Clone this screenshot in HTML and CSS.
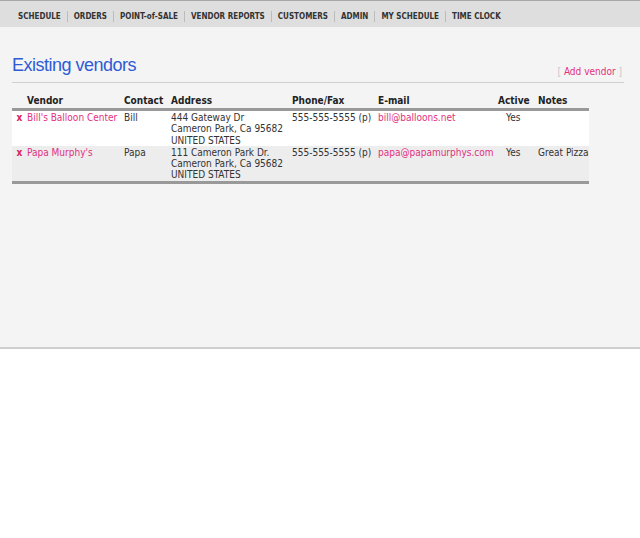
FILE: index.html
```html
<!DOCTYPE html>
<html lang="en">
<head>
  <meta charset="UTF-8">
  <title>Existing vendors</title>
  <link rel="stylesheet" href="styles.css">
</head>
<body>
  <div class="nav">
    <a href="#">SCHEDULE</a>
    <a href="#">ORDERS</a>
    <a href="#">POINT-of-SALE</a>
    <a href="#">VENDOR REPORTS</a>
    <a href="#">CUSTOMERS</a>
    <a href="#">ADMIN</a>
    <a href="#">MY SCHEDULE</a>
    <a href="#">TIME CLOCK</a>
  </div>

  <div class="content">
    <div class="title-row">
      <h1>Existing vendors</h1>
      <span class="add">[ <a href="#">Add vendor</a> ]</span>
    </div>

    <table class="vendors">
      <colgroup>
        <col class="c-del">
        <col class="c-vendor">
        <col class="c-contact">
        <col class="c-address">
        <col class="c-phone">
        <col class="c-email">
        <col class="c-active">
        <col class="c-notes">
      </colgroup>
      <thead>
        <tr>
          <th></th>
          <th>Vendor</th>
          <th>Contact</th>
          <th>Address</th>
          <th>Phone/Fax</th>
          <th>E-mail</th>
          <th>Active</th>
          <th>Notes</th>
        </tr>
      </thead>
      <tbody>
        <tr>
          <td class="del"><a href="#">x</a></td>
          <td><a href="#">Bill's Balloon Center</a></td>
          <td>Bill</td>
          <td>444 Gateway Dr<br>Cameron Park, Ca 95682<br>UNITED STATES</td>
          <td>555-555-5555 (p)</td>
          <td><a href="#">bill@balloons.net</a></td>
          <td class="active">Yes</td>
          <td></td>
        </tr>
        <tr class="alt">
          <td class="del"><a href="#">x</a></td>
          <td><a href="#">Papa Murphy's</a></td>
          <td>Papa</td>
          <td>111 Cameron Park Dr.<br>Cameron Park, Ca 95682<br>UNITED STATES</td>
          <td>555-555-5555 (p)</td>
          <td><a href="#">papa@papamurphys.com</a></td>
          <td class="active">Yes</td>
          <td>Great Pizza</td>
        </tr>
      </tbody>
    </table>
  </div>
</body>
</html>
```

FILE: styles.css
```css
body {
  margin: 0;
  background: #fff;
  font-family: "DejaVu Sans Condensed", "DejaVu Sans", sans-serif;
  font-size: 10px;
  color: #333;
}
a {
  color: #e2307e;
  text-decoration: none;
}

/* top menu */
.nav {
  height: 27px;
  box-sizing: border-box;
  border-top: 1px solid #a8a8a8;
  background: #dedede;
  padding: 4px 0 0 12px;
  display: flex;
  align-items: center;
}
.nav a {
  color: #333;
  font-weight: bold;
  font-size: 8px;
  padding: 0 6px;
  line-height: 11px;
  border-left: 1px solid #bcbcbc;
}
.nav a:first-child {
  border-left: 0;
}

/* page body */
.content {
  background: #f4f4f4;
  height: 294px;
  padding: 26px 16px 0 12px;
  border-bottom: 2px solid #cfcfcf;
  box-shadow: 0 1px 0 #a9a9a9;
}
.title-row {
  display: flex;
  justify-content: space-between;
  align-items: flex-end;
  border-bottom: 1px solid #d0d0d0;
  margin-bottom: 12px;
}
h1 {
  margin: 0 0 5px;
  font-family: "Liberation Sans", Arial, sans-serif;
  font-weight: normal;
  font-size: 18px;
  letter-spacing: -0.5px;
  line-height: 24px;
  color: #2e5bd6;
}
.add {
  color: #c8c8c8;
  line-height: 12px;
  margin-bottom: 4px;
  padding-right: 2px;
}

/* vendor list */
.vendors {
  border-collapse: collapse;
  table-layout: fixed;
  width: 577px;
}
.c-del { width: 15px; }
.c-vendor { width: 97px; }
.c-contact { width: 47px; }
.c-address { width: 121px; }
.c-phone { width: 86px; }
.c-email { width: 120px; }
.c-active { width: 40px; }
.c-notes { width: 51px; }
.vendors th {
  text-align: left;
  font-weight: bold;
  color: #222;
  padding: 0 0 1px;
  line-height: 12px;
  border-bottom: 3px solid #999;
}
.vendors td {
  vertical-align: top;
  padding: 1px 0 0;
  line-height: 11.3px;
  white-space: nowrap;
  overflow: hidden;
  background: #fff;
}
.vendors tr.alt td {
  background: #ededed;
}
.vendors tbody tr:last-child td {
  border-bottom: 3px solid #999;
}
.vendors .active {
  padding-left: 8px;
}
.vendors .del {
  text-align: center;
}
.vendors .del a {
  font-weight: bold;
  color: #d8205a;
}
```
